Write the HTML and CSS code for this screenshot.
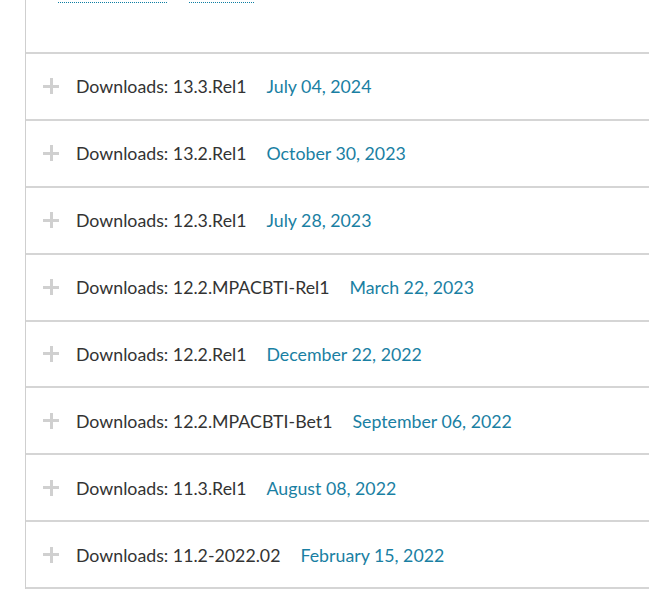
FILE: index.html
```html
<!DOCTYPE html>
<html lang="en">
<head>
<meta charset="utf-8">
<title>Downloads</title>
<link rel="stylesheet" href="styles.css">
</head>
<body>
<div class="panel">
  <div class="top">
    <a class="tab tab-first" href="#">Release notes</a>
    <a class="tab tab-second" href="#">Archive</a>
  </div>
  <ul class="list">
    <li class="row"><span class="plus"></span><span class="name">Downloads: 13.3.Rel1</span><span class="date">July 04, 2024</span></li>
    <li class="row"><span class="plus"></span><span class="name">Downloads: 13.2.Rel1</span><span class="date">October 30, 2023</span></li>
    <li class="row"><span class="plus"></span><span class="name">Downloads: 12.3.Rel1</span><span class="date">July 28, 2023</span></li>
    <li class="row"><span class="plus"></span><span class="name">Downloads: 12.2.MPACBTI-Rel1</span><span class="date">March 22, 2023</span></li>
    <li class="row"><span class="plus"></span><span class="name">Downloads: 12.2.Rel1</span><span class="date">December 22, 2022</span></li>
    <li class="row"><span class="plus"></span><span class="name">Downloads: 12.2.MPACBTI-Bet1</span><span class="date">September 06, 2022</span></li>
    <li class="row"><span class="plus"></span><span class="name">Downloads: 11.3.Rel1</span><span class="date">August 08, 2022</span></li>
    <li class="row"><span class="plus"></span><span class="name">Downloads: 11.2-2022.02</span><span class="date">February 15, 2022</span></li>
  </ul>
</div>
</body>
</html>
```
FILE: styles.css
```css
html, body {
  margin: 0;
  padding: 0;
  background: #fff;
  overflow: hidden;
}
body {
  font-family: Lato, "Open Sans", sans-serif;
  color: #333;
}
.panel {
  margin-left: 25px;
  margin-top: -30px;
  border-left: 1px solid #cfcfcf;
}
.top {
  height: 82px;
  padding-left: 32px;
  display: flex;
  gap: 22px;
  align-items: flex-start;
}
.tab {
  display: inline-block;
  font-size: 18px;
  line-height: 24px;
  height: 33px;
  box-sizing: border-box;
  color: #0d7ea3;
  text-decoration: none;
  border-bottom: 1px dotted #0d7ea3;
  overflow: hidden;
  white-space: nowrap;
}
.tab-first { width: 109px; }
.tab-second { width: 65px; }
.list {
  list-style: none;
  margin: 0;
  padding: 0;
  border-bottom: 2px solid #d5d5d5;
}
.row {
  height: 64.875px;
  border-top: 2px solid #d5d5d5;
  display: flex;
  align-items: center;
  padding-left: 17px;
  font-size: 17.75px;
}
.plus {
  position: relative;
  width: 16px;
  height: 16px;
  flex: none;
  margin-right: 17px;
}
.plus::before,
.plus::after {
  content: "";
  position: absolute;
  background: #d0d0d0;
}
.plus::before {
  left: 0;
  right: 0;
  top: 6.5px;
  height: 3px;
}
.plus::after {
  top: 0;
  bottom: 0;
  left: 6.5px;
  width: 3px;
}
.name {
  color: #333;
  margin-right: 20px;
  white-space: nowrap;
}
.date {
  color: #1a7fa3;
  white-space: nowrap;
}
```
